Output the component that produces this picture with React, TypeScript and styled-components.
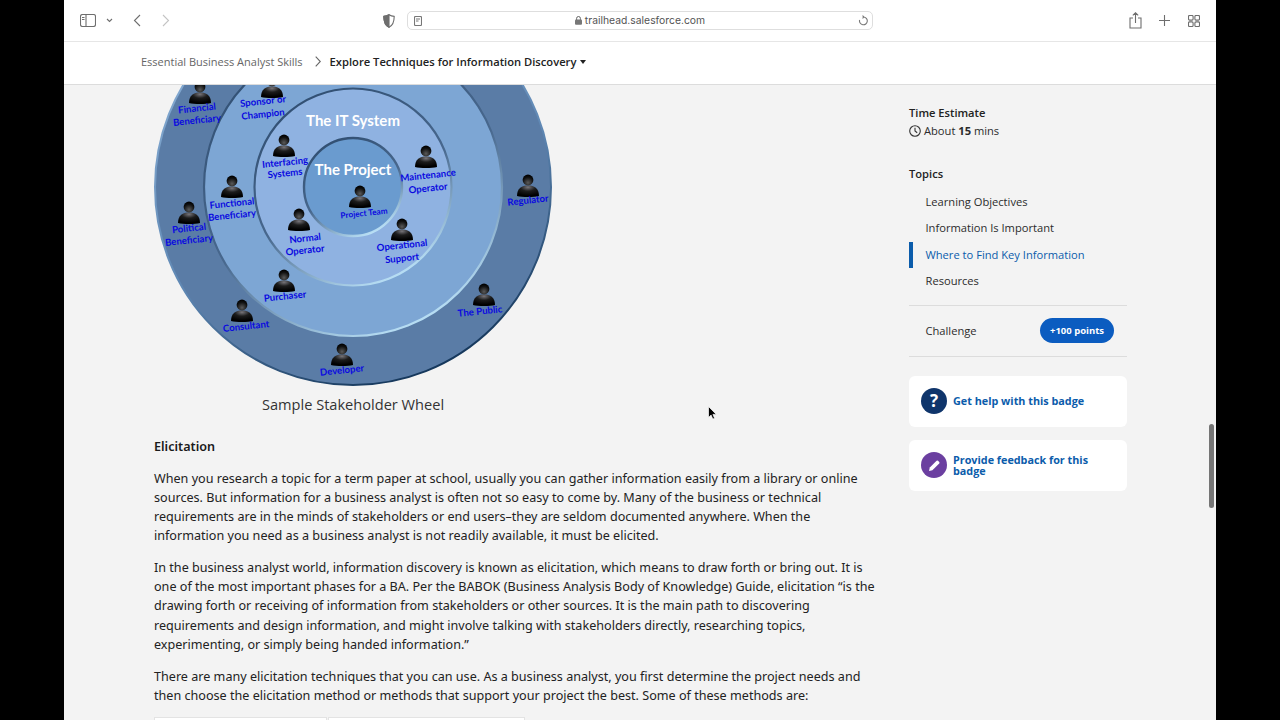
import React from "react";
import styled, { createGlobalStyle } from "styled-components";

const Global = createGlobalStyle`
  html, body { margin: 0; padding: 0; background: #000; }
  body { width: 1280px; height: 720px; overflow: hidden; }
`;
const Stage = styled.div`
  position: relative; width: 1152px; height: 720px; margin: 0 64px; background: #f3f3f3;
  overflow: hidden; display: flex; flex-direction: column; font-family: "Noto Sans", sans-serif;
`;
const Toolbar = styled.header`
  height: 41px; flex: none; background: #fff; border-bottom: 1px solid #e6e6e6; display: flex; align-items: center;
  padding: 0 14px 0 16px; color: #6e6e6e;
`;
const ToolIcon = styled.svg<{ $gap?: number }>`
  flex: none; margin-left: ${(p) => p.$gap ?? 0}px; fill: none; stroke: currentColor; stroke-width: 1.1;
`;
const AddressBar = styled.div`
  width: 466px; height: 19px; flex: none; margin-left: 12px; border: 1px solid #dedede; border-radius: 5px; box-sizing: border-box;
  display: flex; align-items: center; padding: 0 4px 0 6px; color: #777;
`;
const UrlGroup = styled.div`
  flex: 1; display: flex; align-items: center; justify-content: center; gap: 3px; margin-left: 8px; padding-bottom: 1px;
  font: 10.35px "Inter", sans-serif; color: #555;
`;
const Crumbs = styled.nav`
  height: 43px; flex: none; background: #fff; border-bottom: 1px solid #dcdcdc; box-sizing: border-box;
  display: flex; align-items: center; padding: 0 0 3px 77px; font: 11px/14px "Open Sans", sans-serif; color: #666; z-index: 1;
`;
const CrumbCurrent = styled.span` font-weight: 600; font-size: 11.2px; color: #222; margin-left: 9px; `;
const Body = styled.div` flex: 1; min-height: 0; display: flex; `;
const Main = styled.main`
  width: 845px; flex: none; box-sizing: border-box; padding-left: 90px; color: #222; font-size: 12.6px; line-height: 19.2px;
`;
const Wheel = styled.svg` display: block; `;
const Caption = styled.div`
  width: 398px; text-align: center; font: 14.6px/20px "Open Sans", sans-serif; color: #333; margin-top: 7px;
`;
const SubHead = styled.h3` margin: 23px 0 0; font-size: 12.6px; line-height: 19.2px; font-weight: 600; color: #1a1a1a; `;
const Para = styled.p` margin: 12.5px 0 0; white-space: nowrap; `;
const PeekTable = styled.div` display: flex; gap: 1px; margin-top: 12px; height: 8px; `;
const PeekCell = styled.div<{ $w: number }>` width: ${(p) => p.$w}px; background: #fff; border: 1px solid #e3e3e3; box-sizing: border-box; `;
const Side = styled.aside`
  width: 218px; flex: none; padding-top: 19px; font-family: "Open Sans", sans-serif; font-size: 11.15px; color: #2b2b2b;
`;
const SideTitle = styled.div` font-weight: 600; line-height: 17px; color: #222; `;
const Estimate = styled.div`
  display: flex; align-items: center; gap: 3px; line-height: 19px; margin-bottom: 25px;
  b { font-weight: 700; }
`;
const Clock = styled.svg` fill: none; stroke: #333; stroke-width: 1.1; `;
const TopicList = styled.ul` list-style: none; margin: 7px 0 0; padding: 0 0 10px; border-bottom: 1px solid #dcdcdc; `;
const Topic = styled.li<{ $active?: boolean }>`
  height: 26.4px; line-height: 26.4px; padding-left: ${(p) => (p.$active ? 12.5 : 16.5)}px;
  border-left: ${(p) => (p.$active ? "4px solid #0b5cab" : "0")};
  color: ${(p) => (p.$active ? "#0b5cab" : "#2b2b2b")};
`;
const ChallengeRow = styled.div`
  height: 50px; display: flex; align-items: center; justify-content: space-between; padding: 0 13px 0 16.5px;
  border-bottom: 1px solid #dcdcdc;
`;
const Pill = styled.span`
  width: 74px; height: 25px; border-radius: 13px; background: #0b5cc0; color: #fff; font-size: 9.5px; font-weight: 700;
  display: flex; align-items: center; justify-content: center;
`;
const Card = styled.a<{ $first?: boolean }>`
  height: 51px; margin-top: ${(p) => (p.$first ? 19 : 13)}px; background: #fff; border-radius: 6px; display: flex; align-items: center;
  padding: 0 12px; gap: 6px; font-weight: 700; color: #0b5cab; font-size: 10.8px; line-height: 11.5px;
`;
const Badge = styled.span<{ $bg: string }>`
  width: 26px; height: 26px; flex: none; border-radius: 50%; background: ${(p) => p.$bg}; color: #fff;
  display: flex; align-items: center; justify-content: center; font-size: 17px; line-height: 26px; font-weight: 700;
`;
const Scrollbar = styled.div`
  position: absolute; left: 1145px; top: 424px; width: 5px; height: 84px; border-radius: 3px; background: #757575;
`;
const Cursor = styled.svg` position: absolute; left: 644px; top: 406px; `;

const people: [number, number][] = [
  [200, 103], [272, 97], [284, 156], [426, 167], [360, 207], [232, 197], [189, 223], [528, 196],
  [299, 230], [402, 240], [284, 291], [242, 321], [342, 365], [484, 305],
];
const labels: [string, number, number, number?][] = [
  ["Financial", 197, 108], ["Beneficiary", 197, 120], ["Sponsor or", 263, 101], ["Champion", 263, 114],
  ["Interfacing", 285, 162], ["Systems", 285, 173], ["Maintenance", 428, 175], ["Operator", 428, 188],
  ["Project Team", 364, 213, 8.2], ["Functional", 232, 203], ["Beneficiary", 232, 215], ["Political", 189, 228],
  ["Beneficiary", 189, 240], ["Regulator", 528, 200], ["Normal", 305, 238], ["Operator", 305, 250],
  ["Operational", 402, 245], ["Support", 402, 258], ["Purchaser", 285, 296], ["Consultant", 246, 326],
  ["Developer", 342, 370], ["The Public", 480, 311],
];

function WheelArt() {
  const cx = 353, cy = 187;
  return (
    <Wheel width={400} height={302} viewBox="154 85 400 302">
      <defs>
        <linearGradient id="edge" x1="0.2" y1="0" x2="0.7" y2="1">
          <stop offset="0" stopColor="#2f4d70" />
          <stop offset="0.55" stopColor="#48688e" />
          <stop offset="1" stopColor="#bfe6fb" />
        </linearGradient>
        <linearGradient id="outerEdge" x1="0.15" y1="0" x2="0.6" y2="1">
          <stop offset="0" stopColor="#8fb4da" />
          <stop offset="0.6" stopColor="#5f88b4" />
          <stop offset="1" stopColor="#16385c" />
        </linearGradient>
        <radialGradient id="body" cx="0.5" cy="0.15" r="0.75">
          <stop offset="0" stopColor="#77757a" />
          <stop offset="0.45" stopColor="#1c1c1c" />
          <stop offset="1" stopColor="#000" />
        </radialGradient>
        <radialGradient id="head" cx="0.5" cy="0.75" r="0.7">
          <stop offset="0" stopColor="#5a5a5a" />
          <stop offset="0.7" stopColor="#111" />
          <stop offset="1" stopColor="#000" />
        </radialGradient>
        <g id="person">
          <path d="M-11 0 C-11 -8 -6 -10.5 0 -10.5 C6 -10.5 11 -8 11 0 C6 1.4 -6 1.4 -11 0 Z" fill="url(#body)" />
          <circle cx="0" cy="-16" r="5.4" fill="url(#head)" />
        </g>
      </defs>
      <circle cx={cx} cy={cy} r={198} fill="#5a7ca6" stroke="url(#outerEdge)" strokeWidth="2" />
      <circle cx={cx} cy={cy} r={149} fill="#7da6d4" stroke="url(#edge)" strokeWidth="2.2" />
      <circle cx={cx} cy={cy} r={98.5} fill="#8fb2e1" stroke="url(#edge)" strokeWidth="2.2" />
      <circle cx={cx} cy={cy} r={49} fill="#6a9bcf" stroke="url(#edge)" strokeWidth="2.4" />
      <text x={cx} y={126} textAnchor="middle" fontFamily="Lato, sans-serif" fontWeight="700" fontSize="15" fill="#fff">The IT System</text>
      <text x={cx} y={175} textAnchor="middle" fontFamily="Lato, sans-serif" fontWeight="700" fontSize="15" fill="#fff">The Project</text>
      {people.map(([x, y]) => (
        <use key={`${x}-${y}`} href="#person" x={x} y={y} />
      ))}
      {labels.map(([t, x, y, s], i) => (
        <text key={i} x={x} y={y} textAnchor="middle" dominantBaseline="central" transform={`rotate(-6 ${x} ${y})`}
          fontFamily="Lato, sans-serif" fontWeight="700" fontSize={s ?? 9.6} fill="#0a0ae0">{t}</text>
      ))}
    </Wheel>
  );
}

export default function App() {
  return (
    <Stage>
      <Global />
      <Toolbar>
        <ToolIcon width="16" height="13" viewBox="0 0 16 13"><rect x=".5" y=".5" width="15" height="12" rx="2" /><path d="M6 .5v12M2 3.5h2.5M2 5.5h2.5" /></ToolIcon>
        <ToolIcon $gap={10} width="7" height="5" viewBox="0 0 7 5"><path d="M1 1l2.5 2.5L6 1" /></ToolIcon>
        <ToolIcon $gap={20} width="8" height="13" viewBox="0 0 8 13" strokeWidth="1.3"><path d="M7 1L1.5 6.5 7 12" /></ToolIcon>
        <ToolIcon $gap={21} width="8" height="13" viewBox="0 0 8 13" style={{ color: "#c4c4c4" }}><path d="M1 1l5.5 5.5L1 12" /></ToolIcon>
        <ToolIcon $gap={213} width="12" height="14" viewBox="0 0 12 14"><path d="M6 .8c1.6 1 3.4 1.5 5.2 1.6 0 5-1.4 9-5.2 10.8C2.2 11.4.8 7.4.8 2.4 2.6 2.3 4.4 1.8 6 .8z" /><path d="M6 .8v12.4c-3.8-1.8-5.2-5.8-5.2-10.8C2.6 2.3 4.4 1.8 6 .8z" fill="currentColor" /></ToolIcon>
        <AddressBar>
          <ToolIcon width="8" height="10" viewBox="0 0 8 10" strokeWidth=".8"><rect x=".5" y=".5" width="7" height="9" rx="1" /><path d="M2 3h4M2 5h2.5" /></ToolIcon>
          <UrlGroup>
            <ToolIcon width="7" height="9" viewBox="0 0 7 9"><rect y="3.6" width="7" height="5.2" rx="1" fill="#777" stroke="none" /><path d="M1.6 3.8V2.4a1.9 1.9 0 0 1 3.8 0v1.4" strokeWidth=".9" /></ToolIcon>
            <span>trailhead.salesforce.com</span>
          </UrlGroup>
          <ToolIcon $gap={8} width="10" height="11" viewBox="0 0 10 11" strokeWidth=".8"><path d="M5.5 2A3.9 3.9 0 1 1 1.6 5M4.5.6L6 2 4.5 3.4" /></ToolIcon>
        </AddressBar>
        <ToolIcon $gap={256} width="13" height="17" viewBox="0 0 13 17" strokeWidth="1"><path d="M6.5 11V1M3.8 3.4L6.5.8l2.7 2.6M4 6H1v10h11V6H9" /></ToolIcon>
        <ToolIcon $gap={17} width="11" height="11" viewBox="0 0 11 11" strokeWidth="1"><path d="M5.5 0v11M0 5.5h11" /></ToolIcon>
        <ToolIcon $gap={18} width="12" height="12" viewBox="0 0 12 12" strokeWidth=".9"><rect x=".5" y=".5" width="4.6" height="4.6" rx="1" /><rect x="6.9" y=".5" width="4.6" height="4.6" rx="1" /><rect x=".5" y="6.9" width="4.6" height="4.6" rx="1" /><rect x="6.9" y="6.9" width="4.6" height="4.6" rx="1" /></ToolIcon>
      </Toolbar>
      <Crumbs>
        <span>Essential Business Analyst Skills</span>
        <ToolIcon $gap={12} width="6" height="11" viewBox="0 0 6 11" strokeWidth=".9"><path d="M.7.7l4.6 4.8L.7 10.3" /></ToolIcon>
        <CrumbCurrent>Explore Techniques for Information Discovery</CrumbCurrent>
        <ToolIcon $gap={4} width="6" height="4" viewBox="0 0 6 4" style={{ color: "#222" }}><path d="M0 0h6L3 4z" fill="currentColor" stroke="none" /></ToolIcon>
      </Crumbs>
      <Body>
        <Main>
          <WheelArt />
          <Caption>Sample Stakeholder Wheel</Caption>
          <SubHead>Elicitation</SubHead>
          <Para>
            When you research a topic for a term paper at school, usually you can gather information easily from a library or online<br />
            sources. But information for a business analyst is often not so easy to come by. Many of the business or technical<br />
            requirements are in the minds of stakeholders or end users–they are seldom documented anywhere. When the<br />
            information you need as a business analyst is not readily available, it must be elicited.
          </Para>
          <Para>
            In the business analyst world, information discovery is known as elicitation, which means to draw forth or bring out. It is<br />
            one of the most important phases for a BA. Per the BABOK (Business Analysis Body of Knowledge) Guide, elicitation “is the<br />
            drawing forth or receiving of information from stakeholders or other sources. It is the main path to discovering<br />
            requirements and design information, and might involve talking with stakeholders directly, researching topics,<br />
            experimenting, or simply being handed information.”
          </Para>
          <Para>
            There are many elicitation techniques that you can use. As a business analyst, you first determine the project needs and<br />
            then choose the elicitation method or methods that support your project the best. Some of these methods are:
          </Para>
          <PeekTable><PeekCell $w={173} /><PeekCell $w={197} /></PeekTable>
        </Main>
        <Side>
          <SideTitle>Time Estimate</SideTitle>
          <Estimate>
            <Clock width="12" height="12" viewBox="0 0 12 12"><circle cx="6" cy="6" r="5.3" /><path d="M6 2.8V6l2.2 1.8" /></Clock>
            <span>About <b>15</b> mins</span>
          </Estimate>
          <SideTitle>Topics</SideTitle>
          <TopicList>
            <Topic>Learning Objectives</Topic>
            <Topic>Information Is Important</Topic>
            <Topic $active>Where to Find Key Information</Topic>
            <Topic>Resources</Topic>
          </TopicList>
          <ChallengeRow><span>Challenge</span><Pill>+100 points</Pill></ChallengeRow>
          <Card $first>
            <Badge $bg="#0f356b">?</Badge>
            <span>Get help with this badge</span>
          </Card>
          <Card>
            <Badge $bg="#6b3fa0">
              <svg width="13" height="13" viewBox="0 0 13 13" fill="#fff"><path d="M1 12l.8-3.4L8.6 1.8a1 1 0 0 1 1.4 0l1.2 1.2a1 1 0 0 1 0 1.4L4.4 11.2z" /></svg>
            </Badge>
            <span>Provide feedback for this<br />badge</span>
          </Card>
        </Side>
      </Body>
      <Scrollbar />
      <Cursor width="9" height="14" viewBox="0 0 9 14"><path d="M.5.5v11l2.6-2.4 1.7 4 1.8-.8-1.7-3.9h3.4z" fill="#000" stroke="#fff" strokeWidth=".7" /></Cursor>
    </Stage>
  );
}
